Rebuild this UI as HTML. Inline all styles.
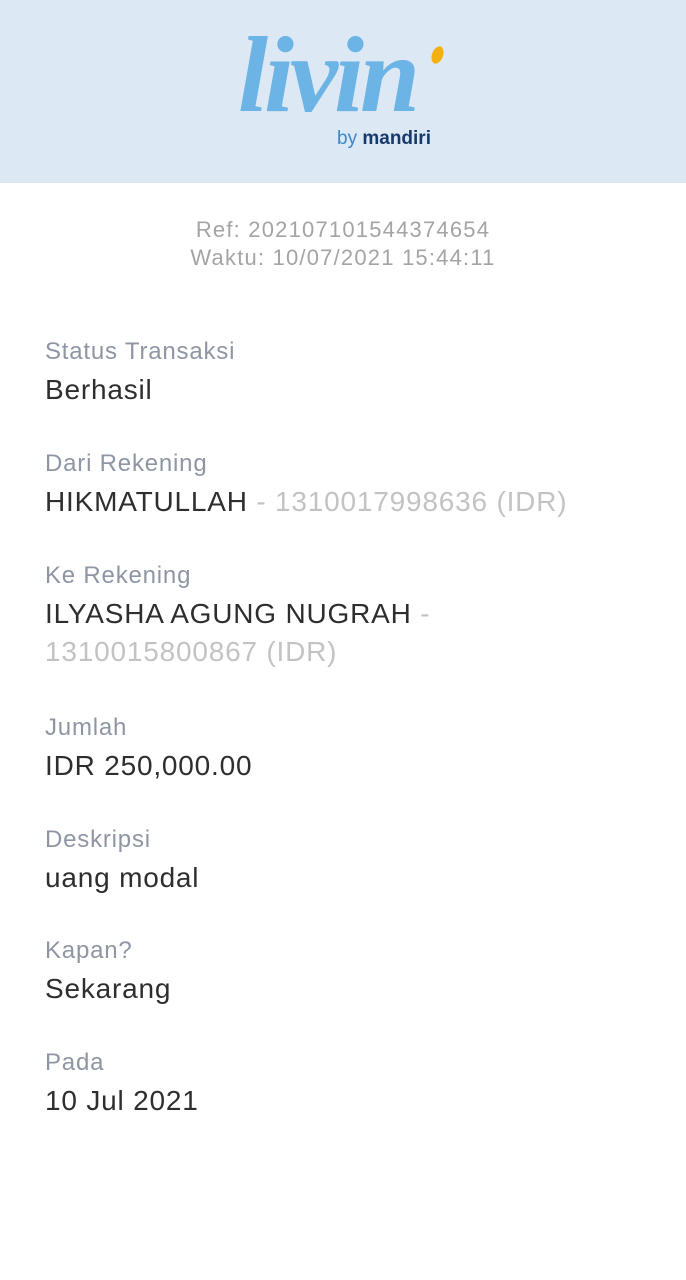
<!DOCTYPE html>
<html><head><meta charset="utf-8"><style>
body{margin:0;width:686px;height:1280px;background:#fff;font-family:"Liberation Sans",sans-serif;position:relative;overflow:hidden}
.hdr{position:absolute;left:0;top:0;width:686px;height:183px;background:#dce8f3}
.logo{position:absolute;left:238px;top:14px;font-family:"Liberation Serif",serif;font-style:italic;font-weight:bold;font-size:108px;color:#6cb3e6;letter-spacing:-4px}
.by{position:absolute;left:337px;top:128px;font-size:19px;color:#3f86c6}
.by b{color:#163a6b}
.dot{position:absolute;left:432px;top:46px;width:11px;height:18px;background:#f4b010;border-radius:50%;transform:rotate(20deg)}
.ref{position:absolute;top:216px;width:686px;text-align:center;color:#a4a4a4;font-size:22px;line-height:28px;letter-spacing:1.2px}
.l{position:absolute;left:45px;font-size:24px;color:#8e96a3;letter-spacing:0.8px}
.v{position:absolute;left:45px;font-size:28px;color:#2e2e2e;line-height:38px;letter-spacing:0.8px}
.g{color:#c3c3c3}
</style></head><body>
<div class="hdr"><div class="logo">livin</div><div class="dot"></div><div class="by">by <b>mandiri</b></div></div>
<div class="ref">Ref: 202107101544374654<br>Waktu: 10/07/2021 15:44:11</div>
<div class="l" style="top:338px">Status Transaksi</div><div class="v" style="top:371px">Berhasil</div>
<div class="l" style="top:450px">Dari Rekening</div><div class="v" style="top:483px">HIKMATULLAH <span class="g">- 1310017998636 (IDR)</span></div>
<div class="l" style="top:562px">Ke Rekening</div><div class="v" style="top:595px">ILYASHA AGUNG NUGRAH <span class="g">-</span><br><span class="g">1310015800867 (IDR)</span></div>
<div class="l" style="top:714px">Jumlah</div><div class="v" style="top:747px">IDR 250,000.00</div>
<div class="l" style="top:826px">Deskripsi</div><div class="v" style="top:859px">uang modal</div>
<div class="l" style="top:937px">Kapan?</div><div class="v" style="top:970px">Sekarang</div>
<div class="l" style="top:1049px">Pada</div><div class="v" style="top:1082px">10 Jul 2021</div>
</body></html>
